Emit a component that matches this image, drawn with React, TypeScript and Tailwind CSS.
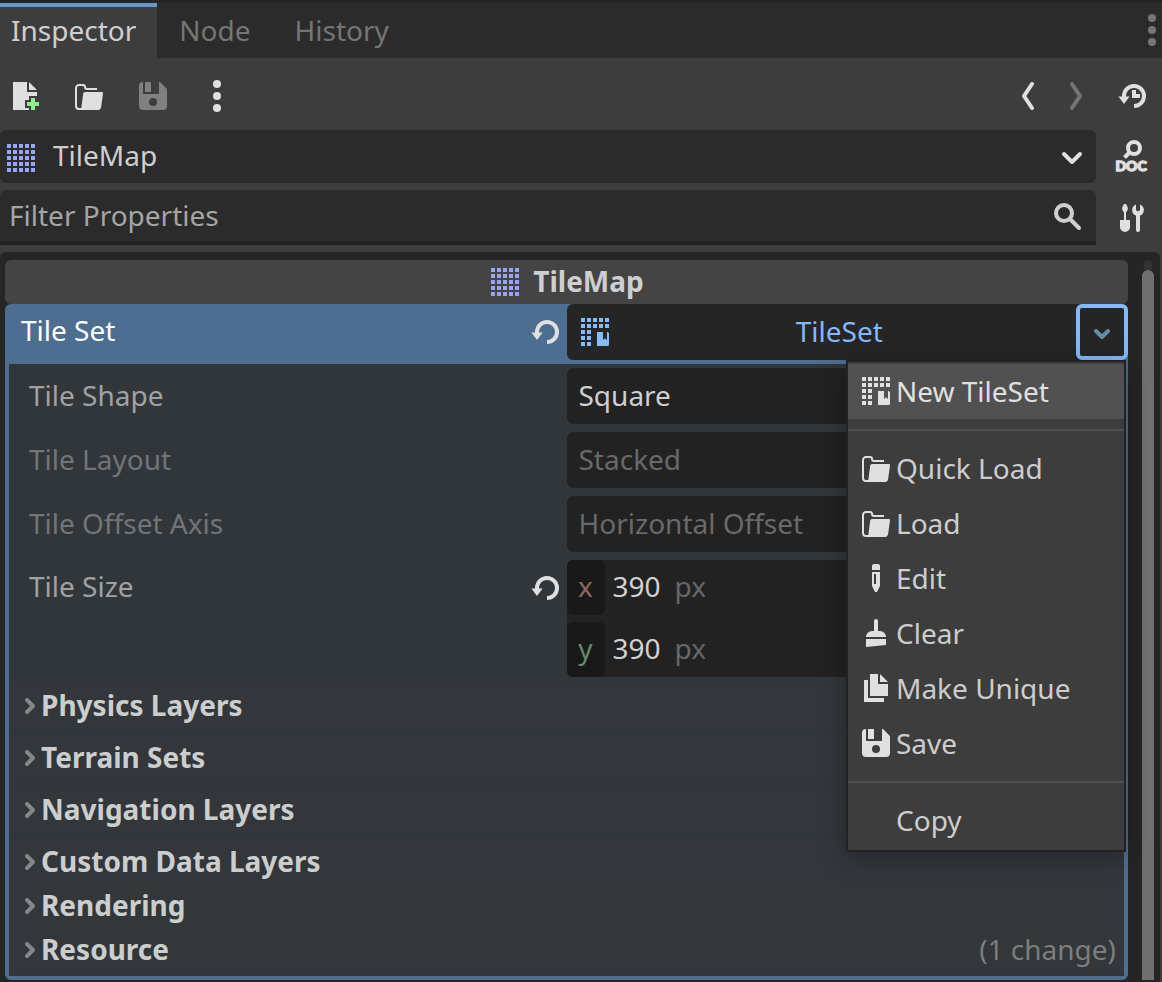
import React, { useState } from "react";
import type { ReactNode } from "react";

type IconProps = { className?: string };

function Icon({ className = "", children }: { className?: string; children: ReactNode }) {
  return (
    <svg viewBox="0 0 16 16" className={`size-8 shrink-0 ${className}`} fill="currentColor" aria-hidden="true">
      {children}
    </svg>
  );
}

const GRID = [1, 4, 7, 10, 13];

function TileMapIcon({ className = "text-[#98a4f4]" }: IconProps) {
  return (
    <Icon className={className}>
      {GRID.map((y) => GRID.map((x) => <rect key={`${x}-${y}`} x={x} y={y} width="2" height="2" />))}
    </Icon>
  );
}

function TileSetIcon({ className }: IconProps) {
  return (
    <Icon className={className}>
      {GRID.map((y) =>
        GRID.filter((x) => y < 7 || x < 7).map((x) => <rect key={`${x}-${y}`} x={x} y={y} width="2" height="2" />),
      )}
      <path d="M9 8v7h5.2a.8.8 0 0 0 .8-.8V8.6l-.6-.6H14v4l-1-.9-1 .9V8z" />
    </Icon>
  );
}

function NewFileIcon() {
  return (
    <Icon>
      <path d="M2 1v14h8v-1H8v-4h2V8h4V6H9V1zm8 0v4h4z" />
      <path fill="#8eef97" d="M11 9v2H9v2h2v2h2v-2h2v-2h-2V9z" />
    </Icon>
  );
}

function FolderIcon() {
  return (
    <Icon>
      <path
        d="M5 14.5H3A1.5 1.5 0 0 1 1.5 13V4A1.5 1.5 0 0 1 3 2.5h2a1 1 0 0 1 1 1 1 1 0 0 0 1 1h5"
        fill="none"
        stroke="currentColor"
      />
      <path d="M6 6h8.4a.6.6 0 0 1 .6.7l-.9 6.5A2 2 0 0 1 12.1 15H3.500c.4-.2.6-.7.700-1.200L5.100 6.800A.9.9 0 0 1 6 6z" />
    </Icon>
  );
}

function SaveIcon() {
  return (
    <Icon>
      <path
        fillRule="evenodd"
        d="M3 1a2 2 0 0 0-2 2v10a2 2 0 0 0 2 2h10a2 2 0 0 0 2-2V4.500L11.500 1H11v6H3zm1 0v5h3V1zm4 8a2 2 0 1 0 0 4 2 2 0 0 0 0-4z"
      />
    </Icon>
  );
}

function DotsIcon() {
  return (
    <Icon>
      <circle cx="8" cy="2" r="2" />
      <circle cx="8" cy="8" r="2" />
      <circle cx="8" cy="14" r="2" />
    </Icon>
  );
}

function ChevronIcon({ d, className }: { d: string; className?: string }) {
  return (
    <Icon className={className}>
      <path d={d} fill="none" stroke="currentColor" strokeWidth="2" strokeLinecap="round" strokeLinejoin="round" />
    </Icon>
  );
}

function RevertIcon({ clock = false, className }: { clock?: boolean; className?: string }) {
  return (
    <Icon className={className}>
      <path d="M4 9V8a5 5 0 1 1 5 5" fill="none" stroke="currentColor" strokeWidth="2" />
      <path d="M1.200 8.200h5.600L4 12z" />
      {clock && <path d="M8 5h2v2h2v2H8z" />}
    </Icon>
  );
}

function DocIcon() {
  return (
    <svg viewBox="0 0 32 32" className="size-8 shrink-0 overflow-visible" fill="currentColor" aria-hidden="true">
      <circle cx="18" cy="8" r="6" fill="none" stroke="currentColor" strokeWidth="4" />
      <path d="M13.500 12.500 8.500 17.500" stroke="currentColor" strokeWidth="4" />
      <text
        x="15"
        y="31"
        textAnchor="middle"
        fontFamily="Lato, sans-serif"
        fontWeight="900"
        fontSize="14"
        stroke="currentColor"
        strokeWidth="1.4"
      >
        DOC
      </text>
    </svg>
  );
}

function ToolsIcon() {
  return (
    <Icon>
      <path d="M4 1h1l.9 1.800v1L5.200 5H5v4h2v3.500a2.500 2.500 0 0 1-5 0V9h2V5h-.2l-.7-1.200v-1z" />
      <path d="M10 1.200a3 3 0 0 0 0 5.600V14a1 1 0 0 0 2 0V6.800a3 3 0 0 0 0-5.600V4l-.6.6h-.8L10 4z" />
    </Icon>
  );
}

function SearchIcon() {
  return (
    <Icon>
      <circle cx="6" cy="6" r="4" fill="none" stroke="currentColor" strokeWidth="2" />
      <path d="m9 9 4.500 4.500" stroke="currentColor" strokeWidth="2" strokeLinecap="round" />
    </Icon>
  );
}

function PencilIcon() {
  return (
    <Icon>
      <path
        fillRule="evenodd"
        d="M7 1a1 1 0 0 0-1 1v2h4V2a1 1 0 0 0-1-1zM6 5v7l1.500 3h1L10 12V5zm1 1h1v5H7z"
      />
    </Icon>
  );
}

function BroomIcon() {
  return (
    <Icon>
      <path d="M8 1a1 1 0 0 0-1 1v5H6a3 3 0 0 0-3 3h10a3 3 0 0 0-3-3H9V2a1 1 0 0 0-1-1zM3 11v4l10-1v-3z" />
    </Icon>
  );
}

function DuplicateIcon() {
  return (
    <Icon>
      <path d="M5 1v11h9V6H9V1zm5 0v4h4zM2 4v11h10v-2H4V4z" />
    </Icon>
  );
}

const DOWN = "M4 6l4 4 4-4";
const DOWN_SMALL = "M5 7.500l3 3 3-3";

function IconButton({
  label,
  className = "",
  disabled = false,
  children,
}: {
  label: string;
  className?: string;
  disabled?: boolean;
  children: ReactNode;
}) {
  return (
    <button type="button" aria-label={label} disabled={disabled} className={`shrink-0 ${className}`}>
      {children}
    </button>
  );
}

function SelectRow({ id, label, value, disabled = false }: { id: string; label: string; value: string; disabled?: boolean }) {
  return (
    <div className="grid grid-cols-2 items-center">
      <label htmlFor={id} className={`pb-0.5 pl-5 ${disabled ? "text-[#717577]" : "text-[#a1a1a1]"}`}>
        {label}
      </label>
      <select
        id={id}
        disabled={disabled}
        className={`h-14 w-full appearance-none rounded-md bg-[#222222] px-3 pb-0.5 opacity-100 ${
          disabled ? "text-[#696969]" : "text-[#cfcfcf]"
        }`}
      >
        <option>{value}</option>
      </select>
    </div>
  );
}

function AxisField({ axis, color }: { axis: string; color: string }) {
  return (
    <div className="flex h-[55px] items-center">
      <label
        htmlFor={`size-${axis}`}
        className={`flex h-full w-[38px] items-center justify-center rounded-md bg-[#191919] pb-1 ${color}`}
      >
        {axis}
      </label>
      <input
        id={`size-${axis}`}
        type="text"
        inputMode="numeric"
        defaultValue="390"
        className="ml-2 w-[62px] bg-transparent pb-1 text-[#d2d2d2] outline-none"
      />
      <span className="pb-1 text-[#666666]">px</span>
    </div>
  );
}

function GroupRow({ label, note, className }: { label: string; note?: string; className: string }) {
  return (
    <button
      type="button"
      aria-expanded="false"
      className={`flex h-11 w-full items-center pr-2 pb-0.5 pl-3 text-left ${className}`}
    >
      <span className="flex w-5 justify-center">
        <ChevronIcon d="M6 5.500l3 3-3 3" className="text-[#858788]" />
      </span>
      <span className="font-bold text-[#cccdcd]">{label}</span>
      {note && <span className="ml-auto text-[#7b7d7e]">{note}</span>}
    </button>
  );
}

function MenuItem({ label, icon, active = false }: { label: string; icon?: ReactNode; active?: boolean }) {
  return (
    <button
      type="button"
      role="menuitem"
      className={`flex h-[55px] w-full items-center gap-1 px-3 pb-0.5 text-left ${
        active ? "bg-[#515151] text-[#e0e0e0]" : "text-[#cdcdcd]"
      }`}
    >
      <span className="size-8 shrink-0 text-[#e0e0e0]">{icon}</span>
      {label}
    </button>
  );
}

function MenuSeparator() {
  return (
    <div role="separator" className="flex h-[22px] items-center">
      <span className="h-0.5 w-full bg-[#505050]" />
    </div>
  );
}

function ResourceMenu() {
  return (
    <div
      role="menu"
      className="absolute top-full right-0.5 z-10 w-70 border-2 border-[#222222] bg-[#3d3d3d] pt-0.5 pb-0.5 shadow-[0_6px_24px_rgba(0,0,0,0.3)]"
    >
      <MenuItem active label="New TileSet" icon={<TileSetIcon />} />
      <MenuSeparator />
      <MenuItem label="Quick Load" icon={<FolderIcon />} />
      <MenuItem label="Load" icon={<FolderIcon />} />
      <MenuItem label="Edit" icon={<PencilIcon />} />
      <MenuItem label="Clear" icon={<BroomIcon />} />
      <MenuItem label="Make Unique" icon={<DuplicateIcon />} />
      <MenuItem label="Save" icon={<SaveIcon />} />
      <MenuSeparator />
      <MenuItem label="Copy" />
    </div>
  );
}

const TABS = ["Inspector", "Node", "History"];

export default function App() {
  const [menuOpen, setMenuOpen] = useState(true);

  return (
    <main className="flex min-h-screen flex-col bg-[#3d3d3d] font-['Noto_Sans',sans-serif] text-[28px] leading-9 text-[#cfcfcf]">
      <header className="flex h-[58px] items-stretch border-t-3 border-[#252525] bg-[#2b2b2b]">
        <div role="tablist" className="flex">
          {TABS.map((tab, i) => (
            <button
              key={tab}
              type="button"
              role="tab"
              aria-selected={i === 0}
              className={
                i === 0
                  ? "border-t-4 border-[#6996cb] bg-[#3d3d3d] pr-[21px] pb-1.5 pl-[11px] text-[#cfcfcf]"
                  : "px-[22px] pb-0.5 text-[#757575]"
              }
            >
              {tab}
            </button>
          ))}
        </div>
        <IconButton label="Dock options" className="-mr-1.5 ml-auto pb-0.5 text-[#757575]">
          <DotsIcon />
        </IconButton>
      </header>

      <div className="flex h-[72px] items-center gap-8 pt-1 pr-3.5 pl-[9px] text-[#e0e0e0]">
        <IconButton label="New resource">
          <NewFileIcon />
        </IconButton>
        <IconButton label="Load resource">
          <FolderIcon />
        </IconButton>
        <IconButton label="Save resource" disabled className="text-[#808080]">
          <SaveIcon />
        </IconButton>
        <IconButton label="More options">
          <DotsIcon />
        </IconButton>
        <div className="ml-auto flex">
          <IconButton label="Previous object" className="mr-4">
            <ChevronIcon d="M10 2L6 8l4 6" />
          </IconButton>
          <IconButton label="Next object" disabled className="mr-6 text-[#757575]">
            <ChevronIcon d="M6 2l4 6-4 6" />
          </IconButton>
          <IconButton label="Object history">
            <RevertIcon clock />
          </IconButton>
        </div>
      </div>

      <div className="flex items-center gap-5 pr-3.5">
        <button
          type="button"
          aria-haspopup="listbox"
          className="flex h-[53px] flex-1 items-center gap-4 rounded-md bg-[#2b2b2b] pt-0.5 pr-2 pl-[5px] text-left"
        >
          <TileMapIcon />
          <span className="pb-1.5">TileMap</span>
          <ChevronIcon d={DOWN} className="ml-auto text-[#e0e0e0]" />
        </button>
        <IconButton label="Open documentation" className="pb-0.5 text-[#e0e0e0]">
          <DocIcon />
        </IconButton>
      </div>

      <div className="mt-[7px] flex items-center gap-5 pr-3.5">
        <div className="flex h-[55px] flex-1 items-center rounded-t-md border-b-4 border-[#222222] bg-[#2b2b2b] pt-0.5 pr-3 pl-[9px]">
          <input
            type="text"
            aria-label="Filter Properties"
            placeholder="Filter Properties"
            className="min-w-0 flex-1 bg-transparent pb-1 outline-none placeholder:text-[#a5a5a5]"
          />
          <SearchIcon />
        </div>
        <IconButton label="Property tools" className="text-[#e0e0e0]">
          <ToolsIcon />
        </IconButton>
      </div>

      <section className="mt-[7px] mr-0.5 flex flex-1 gap-3.5 rounded-t-md bg-[#252525] pt-2 pr-1.5 pb-0.5 pl-[5px]">
        <div className="min-w-0 flex-1">
          <h2 className="flex h-11 items-center justify-center gap-3 rounded-md bg-[#444444] font-bold text-[#cfcfcf]">
            <TileMapIcon />
            <span className="pb-0.5">TileMap</span>
          </h2>

          <div className="rounded-md bg-[#4e6e91]">
            <div className="grid grid-cols-2 pb-1">
              <div className="flex items-center justify-between pr-1.5 pl-4 text-white">
                <span className="pb-1">Tile Set</span>
                <IconButton label="Revert Tile Set" className="text-[#e0e0e0]">
                  <RevertIcon />
                </IconButton>
              </div>
              <div className="relative flex h-14 rounded-md bg-[#252525]">
                <button type="button" className="flex flex-1 items-center gap-1 px-3 text-[#84b8fb]">
                  <TileSetIcon className="text-[#84bcff]" />
                  <span className="flex-1 pb-0.5 text-center">TileSet</span>
                </button>
                <button
                  type="button"
                  aria-label="Resource options"
                  aria-expanded={menuOpen}
                  onClick={() => setMenuOpen(!menuOpen)}
                  className="flex w-[52px] items-center justify-center rounded-md border-4 border-[#84b8fb]"
                >
                  <ChevronIcon d={DOWN_SMALL} className="text-[#628ea8]" />
                </button>
                {menuOpen && <ResourceMenu />}
              </div>
            </div>

            <div className="px-1 pb-1">
              <div className="flex flex-col bg-[#31363a] pb-1">
                <div className="flex flex-col gap-2 pt-1">
                  <SelectRow id="shape" label="Tile Shape" value="Square" />
                  <SelectRow id="layout" label="Tile Layout" value="Stacked" disabled />
                  <SelectRow id="axis" label="Tile Offset Axis" value="Horizontal Offset" disabled />
                  <div className="grid grid-cols-2">
                    <div className="flex h-[55px] items-center justify-between pr-1.5 pl-5 text-[#a1a1a1]">
                      <span className="pb-1">Tile Size</span>
                      <IconButton label="Revert Tile Size" className="text-[#e0e0e0]">
                        <RevertIcon />
                      </IconButton>
                    </div>
                    <div className="flex flex-col gap-[7px] rounded-md bg-[#222222]">
                      <AxisField axis="x" color="text-[#8a6a5e]" />
                      <AxisField axis="y" color="text-[#648a6a]" />
                    </div>
                  </div>
                </div>
                <div className="mt-[7px] flex flex-col gap-2">
                  <GroupRow label="Physics Layers" className="bg-[#33363b]" />
                  <GroupRow label="Terrain Sets" className="bg-[#33363b]" />
                  <GroupRow label="Navigation Layers" className="bg-[#33363b]" />
                  <GroupRow label="Custom Data Layers" className="bg-[#33363b]" />
                </div>
                <GroupRow label="Rendering" className="bg-[#333739]" />
                <GroupRow label="Resource" note="(1 change)" className="bg-[#333739]" />
              </div>
            </div>
          </div>
        </div>

        <div className="flex w-3 flex-col items-center" aria-hidden="true">
          <div className="h-2.5 w-2 rounded-t-full bg-[#333333]" />
          <div className="w-3 flex-1 rounded-t-full bg-[#707070]" />
        </div>
      </section>
    </main>
  );
}
